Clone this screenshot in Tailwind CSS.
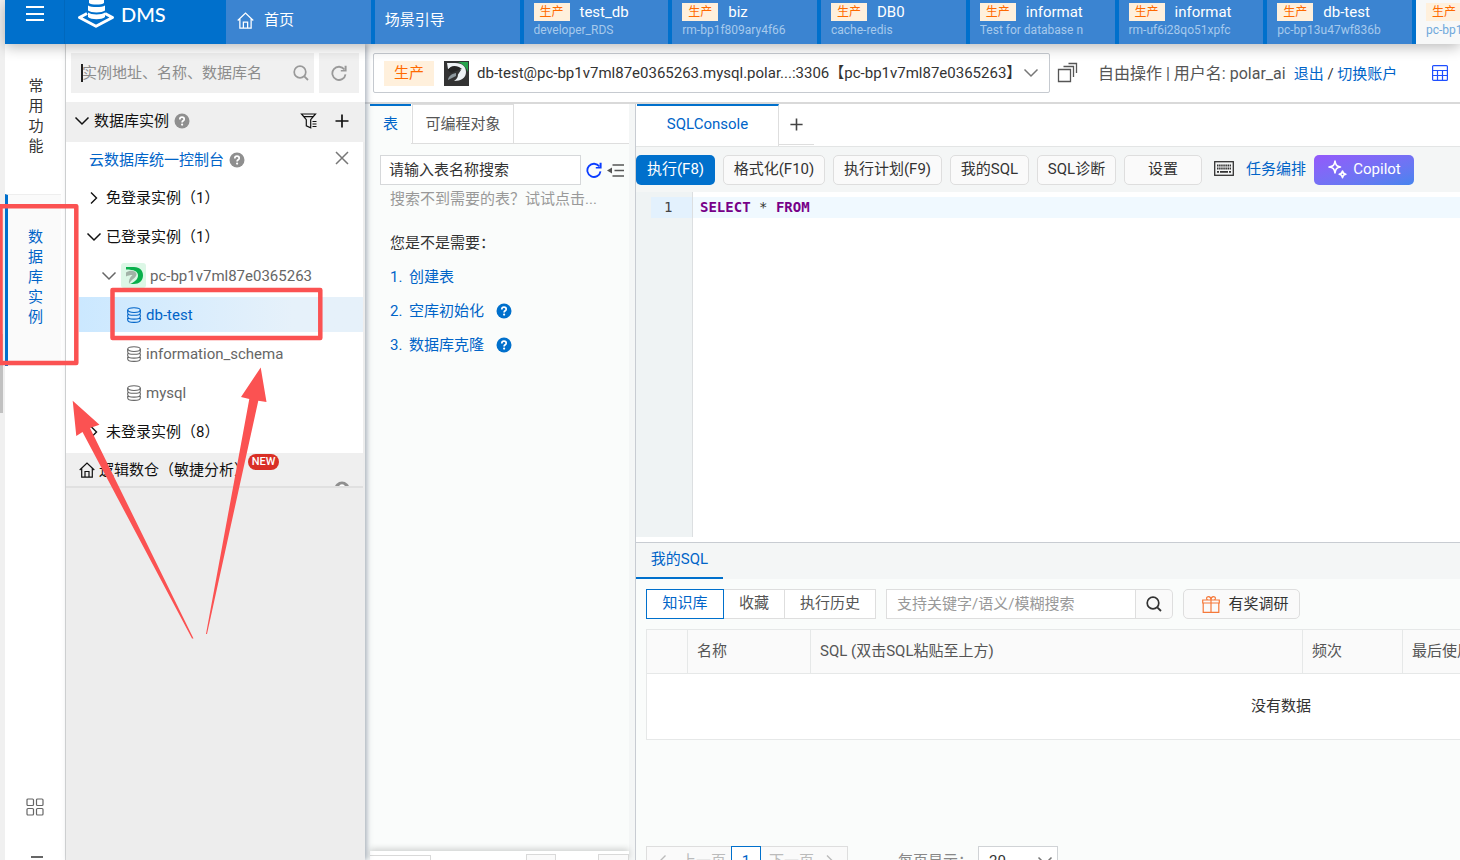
<!DOCTYPE html>
<html lang="zh-CN">

<head>
    <meta charset="UTF-8" />
    <meta name="viewport" content="width=device-width, initial-scale=1.0" />
    <title>DMS</title>
    <script src="https://cdn.jsdelivr.net/npm/@tailwindcss/browser@4"></script>
</head>

<body class="relative flex h-screen overflow-hidden bg-white text-[15px] leading-5 text-[#333] font-['Roboto','Noto_Sans_CJK_SC',sans-serif]">

    <!-- Shared icons -->
    <svg class="hidden">
        <symbol id="i-help" viewBox="0 0 16 16">
            <circle cx="8" cy="8" r="7.5" fill="currentColor" />
            <path d="M5.8 6.4c0-1.4 1-2.2 2.2-2.2s2.2.8 2.2 2c0 1.6-2.1 1.6-2.1 3.2" fill="none" stroke="#fff" stroke-width="1.7" />
            <circle cx="8.1" cy="11.6" r="1.1" fill="#fff" />
        </symbol>
        <symbol id="i-down" viewBox="0 0 16 16">
            <path d="M1.5 4.5 8 11l6.5-6.5" fill="none" stroke="currentColor" stroke-width="1.5" />
        </symbol>
        <symbol id="i-right" viewBox="0 0 16 16">
            <path d="M5 2.5 10.5 8 5 13.5" fill="none" stroke="currentColor" stroke-width="1.4" />
        </symbol>
        <symbol id="i-left" viewBox="0 0 16 16">
            <path d="M10.5 2.5 5 8l5.5 5.5" fill="none" stroke="currentColor" stroke-width="1.4" />
        </symbol>
        <symbol id="i-plus" viewBox="0 0 16 16">
            <path d="M8 1.5v13M1.5 8h13" fill="none" stroke="currentColor" stroke-width="1.7" />
        </symbol>
        <symbol id="i-search" viewBox="0 0 16 16">
            <circle cx="7" cy="7" r="5.8" fill="none" stroke="currentColor" stroke-width="1.7" />
            <path d="m11.3 11.3 3.7 3.7" stroke="currentColor" stroke-width="1.8" />
        </symbol>
        <symbol id="i-refresh" viewBox="0 0 16 16">
            <path d="M13.4 4.6A6.6 6.6 0 1 0 14.5 9.3" fill="none" stroke="currentColor" stroke-width="1.8" />
            <path d="M15.6.8v5.8H9.8v-1.5h3.8V.8z" fill="currentColor" />
        </symbol>
        <symbol id="i-db" viewBox="0 0 16 16">
            <g fill="none" stroke="currentColor" stroke-width="1.1">
                <ellipse cx="8" cy="3.1" rx="6.3" ry="2.4" />
                <path d="M1.7 3.1v2.8c0 1.300 2.800 2.400 6.300 2.400s6.300-1.100 6.300-2.400V3.100M1.700 7.500v2.200c0 1.300 2.800 2.400 6.300 2.400s6.300-1.100 6.300-2.400V7.500M1.700 11v2c0 1.300 2.800 2.400 6.300 2.400s6.300-1.100 6.300-2.400v-2" />
            </g>
        </symbol>
        <symbol id="i-home" viewBox="0 0 16 16">
            <g fill="none" stroke="currentColor" stroke-width="1.2">
                <path d="M.7 8 8 1l7.3 7M2.700 6.500v8.600h10.600V6.500" />
                <path d="M6 15V9.500h4V15" />
            </g>
        </symbol>
    </svg>

    <!-- Outer scroll bar -->
    <div class="w-[5px] shrink-0 bg-[#f0f0f0] pt-[334px]">
        <div class="h-[79px] w-[3px] bg-[#c1c1c1]"></div>
    </div>

    <div class="flex min-w-0 flex-1 flex-col">

        <!-- Header -->
        <header class="relative z-10 flex h-11 shrink-0 bg-[#0070cc] text-white shadow-[0_3px_14px_rgba(0,0,0,0.28)]">
            <button aria-label="菜单" class="flex w-[60px] justify-center border-r border-[#0068bd] pt-1.5">
                <svg class="h-4 w-[18px]" viewBox="0 0 18 16"><path d="M0 1h18M0 8h18M0 14h18" stroke="#fff" stroke-width="2" /></svg>
            </button>
            <a href="#" class="flex w-[161px] items-start gap-1.5 pl-3 text-white">
                <svg class="h-7 w-[38px]" viewBox="0 0 38 28">
                    <path d="M10 13.500 2.500 17.500 19 26.300 35.500 17.500 28 13.500" fill="none" stroke="#fff" stroke-width="3" stroke-linejoin="round" />
                    <path d="M12 0h15v3c-2 2-13 2-15 0zM11 5.500c3 2 14 2 17 0v5c-3 2.500-14 2.500-17 0zM11 12.500c3 2.500 14 2.500 17 0V17c-3 3-14 3-17 0z" fill="#fff" />
                </svg>
                <span class="text-[20px] leading-7 font-medium font-['Lato',sans-serif]">DMS</span>
            </a>
            <nav class="grid min-w-0 flex-1 grid-cols-[repeat(8,1fr)_44px] gap-1 overflow-hidden">
                <a href="#" class="flex items-center gap-2.5 bg-[#3b84d1] pb-1 pl-[11px]">
                    <svg class="size-[17px]"><use href="#i-home" /></svg>首页
                </a>
                <a href="#" class="flex items-center bg-[#3b84d1] pb-1 pl-2.5">场景引导</a>
                <a href="#" class="bg-[#3b84d1] pl-2.5 pt-0.5">
                    <span class="flex w-[106px] items-center gap-2.5 overflow-hidden"><span class="h-[18px] w-9 shrink-0 bg-[#fff0dc] text-center text-xs leading-[18px] text-[#ff6a00]">生产</span><span>test_db</span></span>
                    <span class="block w-[106px] overflow-hidden text-xs leading-4 whitespace-nowrap text-[#a6c9ec]">developer_RDS</span>
                </a>
                <a href="#" class="bg-[#3b84d1] pl-2.5 pt-0.5">
                    <span class="flex w-[106px] items-center gap-2.5 overflow-hidden"><span class="h-[18px] w-9 shrink-0 bg-[#fff0dc] text-center text-xs leading-[18px] text-[#ff6a00]">生产</span><span>biz</span></span>
                    <span class="block w-[106px] overflow-hidden text-xs leading-4 whitespace-nowrap text-[#a6c9ec]">rm-bp1f809ary4f66</span>
                </a>
                <a href="#" class="bg-[#3b84d1] pl-2.5 pt-0.5">
                    <span class="flex w-[106px] items-center gap-2.5 overflow-hidden"><span class="h-[18px] w-9 shrink-0 bg-[#fff0dc] text-center text-xs leading-[18px] text-[#ff6a00]">生产</span><span>DB0</span></span>
                    <span class="block w-[106px] overflow-hidden text-xs leading-4 whitespace-nowrap text-[#a6c9ec]">cache-redis</span>
                </a>
                <a href="#" class="bg-[#3b84d1] pl-2.5 pt-0.5">
                    <span class="flex w-[106px] items-center gap-2.5 overflow-hidden"><span class="h-[18px] w-9 shrink-0 bg-[#fff0dc] text-center text-xs leading-[18px] text-[#ff6a00]">生产</span><span>informat</span></span>
                    <span class="block w-[106px] overflow-hidden text-xs leading-4 whitespace-nowrap text-[#a6c9ec]">Test for database n</span>
                </a>
                <a href="#" class="bg-[#3b84d1] pl-2.5 pt-0.5">
                    <span class="flex w-[106px] items-center gap-2.5 overflow-hidden"><span class="h-[18px] w-9 shrink-0 bg-[#fff0dc] text-center text-xs leading-[18px] text-[#ff6a00]">生产</span><span>informat</span></span>
                    <span class="block w-[106px] overflow-hidden text-xs leading-4 whitespace-nowrap text-[#a6c9ec]">rm-uf6i28qo51xpfc</span>
                </a>
                <a href="#" class="bg-[#3b84d1] pl-2.5 pt-0.5">
                    <span class="flex w-[106px] items-center gap-2.5 overflow-hidden"><span class="h-[18px] w-9 shrink-0 bg-[#fff0dc] text-center text-xs leading-[18px] text-[#ff6a00]">生产</span><span>db-test</span></span>
                    <span class="block w-[106px] overflow-hidden text-xs leading-4 whitespace-nowrap text-[#a6c9ec]">pc-bp13u47wf836b</span>
                </a>
                <a href="#" class="overflow-hidden bg-[#f7f8f8] pl-2.5 pt-0.5">
                    <span class="flex h-5 items-center"><span class="h-[18px] w-9 shrink-0 bg-[#fff0dc] text-center text-xs leading-[18px] text-[#ff6a00]">生产</span></span>
                    <span class="block text-xs leading-4 whitespace-nowrap text-[#6fa8dc]">pc-bp1</span>
                </a>
            </nav>
        </header>

        <div class="flex min-h-0 flex-1">

            <!-- Rail -->
            <aside class="flex w-[61px] shrink-0 flex-col border-r border-[#d9d9d9]">
                <button class="flex h-[150px] flex-col items-center pt-8 pl-0.5">
                    <span>常</span><span>用</span><span>功</span><span>能</span>
                </button>
                <button class="mr-1 flex h-[172px] flex-col items-center border-t border-l-3 border-t-[#eee] border-l-[#0070cc] bg-[#fafafa] pt-8 pl-0.5 text-[#0064c8]">
                    <span>数</span><span>据</span><span>库</span><span>实</span><span>例</span>
                </button>
                <div class="mt-auto flex h-[62px] shrink-0 flex-col items-center gap-10">
                    <svg class="size-[18px] shrink-0" viewBox="0 0 18 18" fill="none" stroke="#666" stroke-width="1.2">
                        <rect x="1" y="1" width="6.5" height="6.5" rx="1" /><rect x="10.5" y="1" width="6.5" height="6.5" rx="1" />
                        <rect x="1" y="10.5" width="6.5" height="6.5" rx="1" /><rect x="10.5" y="10.5" width="6.5" height="6.5" rx="1" />
                    </svg>
                    <div class="ml-1 h-0.5 w-3 shrink-0 bg-[#666]"></div>
                </div>
            </aside>

            <!-- Instance tree -->
            <aside class="relative z-[5] flex w-[299px] shrink-0 flex-col bg-[#ededed] text-[#111] shadow-[2px_0_5px_rgba(90,105,125,0.5)]">
                <div class="flex gap-[5px] bg-white px-[5px] py-[9px] pr-1.5">
                    <label class="relative flex h-10 flex-1 items-center bg-[#f0f0f0] pr-[5px]">
                        <input type="text" aria-label="搜索实例" placeholder="实例地址、名称、数据库名" class="h-full w-full min-w-0 bg-transparent pl-[11px] outline-none placeholder:text-[#8c8c8c]" />
                        <span class="absolute left-2.5 h-[18px] w-0.5 bg-[#222]"></span>
                        <svg class="size-4 shrink-0 text-[#999]"><use href="#i-search" /></svg>
                    </label>
                    <button aria-label="刷新" class="flex size-10 items-center justify-center bg-[#f0f0f0] text-[#999]">
                        <svg class="size-4"><use href="#i-refresh" /></svg>
                    </button>
                </div>

                <div class="flex h-10 shrink-0 items-center gap-1 bg-[#efefef] pb-0.5 pr-[15px] pl-2">
                    <svg class="size-4"><use href="#i-down" /></svg>
                    <span>数据库实例</span>
                    <svg class="ml-px size-4 text-[#8f8f8f]"><use href="#i-help" /></svg>
                    <button aria-label="筛选" class="mr-3 ml-auto">
                        <svg class="size-[18px]" viewBox="0 0 18 18" fill="none" stroke="currentColor" stroke-width="1.2">
                            <path d="M1.500 2h14l-4.800 5.700v8.100l-4.400-2V7.700z M4 4.700h9" /><path d="M12.500 9.500h4M12.500 12h4M12.500 14.500h4" />
                        </svg>
                    </button>
                    <button aria-label="新增"><svg class="size-4"><use href="#i-plus" /></svg></button>
                </div>

                <div class="mr-0.5 border-b-2 border-white bg-white">
                    <div class="flex h-9 items-center gap-1 pb-px pr-[13px] pl-[23px]">
                        <a href="#" class="text-[#0064c8]">云数据库统一控制台</a>
                        <svg class="ml-px size-4 text-[#8f8f8f]"><use href="#i-help" /></svg>
                        <button aria-label="关闭" class="ml-auto pb-1">
                            <svg class="size-4" viewBox="0 0 16 16"><path d="m2 2 12 12M14 2 2 14" stroke="#777" stroke-width="1.5" /></svg>
                        </button>
                    </div>
                    <div class="flex h-[39px] items-center gap-1 pl-5"><svg class="size-4"><use href="#i-right" /></svg>免登录实例（1）</div>
                    <div class="flex h-[39px] items-center gap-1 pl-5"><svg class="size-4"><use href="#i-down" /></svg>已登录实例（1）</div>
                    <div class="flex h-[39px] items-center gap-1 pl-[35px] text-[#666]">
                        <svg class="size-4"><use href="#i-down" /></svg>
                        <svg class="size-[25px]" viewBox="0 0 25 25">
                            <rect width="25" height="25" rx="3" fill="#dcf7e6" />
                            <path d="M5 4h8c6 0 9 4 9 8.500 0 5-4 8.500-9 8.500H9c5-2 8-5 8-8.500C17 8.500 13 6.500 5 6.500z" fill="#09b04c" />
                            <path d="M5 9.500C9 6.500 15 7.500 15.500 11c.3 3.500-5 5-7.500 10-.5-3 .5-6.500 3.500-9C9 12 7 12.500 5 13.500z" fill="#a2b3a7" />
                        </svg>
                        <span>pc-bp1v7ml87e0365263</span>
                    </div>
                    <div class="h-[39px] py-0.5 pl-[13px]">
                        <div class="flex h-[35px] items-center gap-1 bg-linear-to-r from-[#cbe8ff] to-[#e6f1fa] to-75% pl-[47px] text-[#0064c8]">
                            <svg class="size-4"><use href="#i-db" /></svg>db-test
                        </div>
                    </div>
                    <div class="flex h-[39px] items-center gap-1 pl-[60px] text-[#666]"><svg class="size-4"><use href="#i-db" /></svg>information_schema</div>
                    <div class="flex h-[39px] items-center gap-1 pl-[60px] text-[#666]"><svg class="size-4"><use href="#i-db" /></svg>mysql</div>
                    <div class="flex h-[39px] items-center gap-1 pl-5"><svg class="size-4"><use href="#i-right" /></svg>未登录实例（8）</div>
                </div>

                <div class="relative mr-0.5 flex h-[35px] shrink-0 items-center gap-1 overflow-hidden border-b-2 border-[#e0e0e0] bg-[#efefef] pl-[13px]">
                    <svg class="size-4"><use href="#i-home" /></svg>
                    <span>逻辑数仓（敏捷分析）</span>
                    <span class="absolute top-px left-[182px] h-4 w-[31px] rounded-full bg-[#d93026] text-center text-[11px] leading-4 font-medium text-white">NEW</span>
                    <svg class="absolute top-7 right-[13px] size-4 text-[#8f8f8f]"><use href="#i-help" /></svg>
                </div>
            </aside>

            <main class="flex min-w-0 flex-1 flex-col">

                <!-- Connection bar -->
                <div class="flex h-[60px] shrink-0 items-start border-b-2 border-[#d9d9d9] pt-[9px] pl-2">
                    <button class="flex h-10 w-[677px] shrink-0 items-center rounded-xs border border-[#c6cad0] px-2.5">
                        <span class="mr-2.5 h-[25px] w-[50px] shrink-0 bg-[#fff0dc] text-center leading-[25px] text-[#ff6a00]">生产</span>
                        <svg class="mr-2 size-[25px] shrink-0" viewBox="0 0 25 25">
                            <rect width="25" height="25" fill="#333" />
                            <path d="M14 1h10v10c-2-5-5-8-10-10z" fill="#27a34d" />
                            <path d="M3 2h8c8 0 11 4 11 9 0 6-5 9-12 9 3-2 4-4 4-6.500L17 9l-5-3-8 2z" fill="#eef2f5" />
                            <path d="M4 9c2-4 6-5 11-3l3 2-6 2-5 2z" fill="#252525" /><path d="M12 12c-5 1-8 4-8 7l8-4z" fill="#8e999e" />
                        </svg>
                        <span class="whitespace-nowrap">db-test@pc-bp1v7ml87e0365263.mysql.polar...:3306【pc-bp1v7ml87e0365263】</span>
                        <svg class="ml-auto size-4 shrink-0 text-[#777]"><use href="#i-down" /></svg>
                    </button>
                    <button aria-label="复制" class="mt-[9px] ml-[7px]">
                        <svg class="size-[21px]" viewBox="0 0 21 21" fill="none" stroke="#555" stroke-width="1.3">
                            <path d="M1.500 7.500h12v12h-12zM6.500 4.500h10V15M11.500 1.500h8V11" />
                        </svg>
                    </button>
                    <div class="mt-[11px] ml-5 flex items-center gap-2 whitespace-nowrap">
                        <span class="text-base leading-5 text-[#555]">自由操作 | 用户名: polar_ai</span>
                        <span><a href="#" class="text-[#0064c8]">退出</a> / <a href="#" class="text-[#0064c8]">切换账户</a></span>
                    </div>
                    <button aria-label="表格" class="mt-3 mr-3 ml-auto">
                        <svg class="size-4" viewBox="0 0 16 16" fill="none" stroke="#1f4fff" stroke-width="1.2">
                            <rect x=".6" y=".6" width="14.8" height="14.8" rx="1" /><path d="M.6 5.500h14.800M.6 10.500h14.800M5.500 5.500v10M10.500 5.500v10" />
                        </svg>
                    </button>
                </div>

                <div class="flex min-h-0 flex-1">

                    <!-- Table list -->
                    <section class="flex w-[270px] shrink-0 flex-col border-r-6 border-[#f4f6f6] bg-[#fafcfb] pl-[5px]">
                        <div class="flex h-10 shrink-0 border-b border-[#dedede] bg-white text-[#555]">
                            <button class="-mb-px w-[41px] border-t-2 border-[#0070cc] bg-[#fafcfb] pb-0.5 text-[#0064c8]">表</button>
                            <button class="ml-px w-[102px] border-x border-t border-[#dedede]">可编程对象</button>
                        </div>
                        <div class="mt-[11px] flex items-center gap-[5px] pl-2.5">
                            <input type="text" aria-label="表名称" placeholder="请输入表名称搜索" class="h-[30px] w-[201px] border border-[#d6d8da] bg-white px-2 outline-none placeholder:text-[#333]" />
                            <button aria-label="刷新表"><svg class="size-4 text-[#0a3cff]"><use href="#i-refresh" /></svg></button>
                            <button aria-label="收起">
                                <svg class="size-[17px]" viewBox="0 0 17 17"><path d="M5.500 3H17M7.500 8.500H17M5.500 14H17" stroke="#555" stroke-width="1.3" /><path d="M0 8.500 5 5.500v6z" fill="#555" /></svg>
                            </button>
                        </div>
                        <div class="flex flex-col gap-[14px] pt-1 pl-5">
                            <p class="mb-2.5 text-[#999]">搜索不到需要的表？试试点击...</p>
                            <p>您是不是需要：</p>
                            <a href="#" class="flex items-center text-[#0064c8]"><span class="w-[19px]">1.</span>创建表</a>
                            <div class="flex items-center gap-3 text-[#0064c8]"><a href="#" class="flex"><span class="w-[19px]">2.</span>空库初始化</a><svg class="size-4 text-[#0070cc]"><use href="#i-help" /></svg></div>
                            <div class="flex items-center gap-3 text-[#0064c8]"><a href="#" class="flex"><span class="w-[19px]">3.</span>数据库克隆</a><svg class="size-4 text-[#0070cc]"><use href="#i-help" /></svg></div>
                        </div>
                        <div class="mt-auto flex h-[9px] shrink-0 items-end bg-white shadow-[0_-2px_6px_rgba(0,0,0,0.18)]">
                            <div class="h-[5px] w-[61px] border-t border-r border-[#d9d9d9]"></div>
                            <div class="ml-auto h-1.5 w-[30px] border-x border-t border-[#d9d9d9] bg-[#fafafa]"></div>
                            <div class="ml-[42px] h-1.5 w-[31px] border-x border-t border-[#d9d9d9] bg-[#fafafa]"></div>
                        </div>
                    </section>

                    <!-- SQL console -->
                    <section class="flex min-w-0 flex-1 flex-col border-l border-[#c8ccd2]">
                        <div class="flex h-[43px] shrink-0 border-b border-[#e3e5e5] bg-white">
                            <button class="ml-px w-[142px] border-t-2 border-r border-t-[#0070cc] border-r-[#dedede] pb-1 text-[#0064c8]">SQLConsole</button>
                            <button aria-label="新建" class="mb-px flex w-[35px] items-center justify-center border-b border-[#dedede] text-[#444]"><svg class="size-[15px]"><use href="#i-plus" /></svg></button>
                        </div>
                        <div class="flex h-[45px] shrink-0 items-center gap-2 bg-[#f4f6f6] whitespace-nowrap">
                            <button class="h-[30px] w-[79px] rounded-[5px] bg-[#0070cc] pb-0.5 text-white">执行(F8)</button>
                            <button class="h-[30px] w-[102px] rounded-[5px] border border-[#dedede] bg-[#fafafa] pb-0.5">格式化(F10)</button>
                            <button class="h-[30px] w-[109px] rounded-[5px] border border-[#dedede] bg-[#fafafa] pb-0.5">执行计划(F9)</button>
                            <button class="h-[30px] w-[79px] rounded-[5px] border border-[#dedede] bg-[#fafafa] pb-0.5">我的SQL</button>
                            <button class="h-[30px] w-[79px] rounded-[5px] border border-[#dedede] bg-[#fafafa] pb-0.5">SQL诊断</button>
                            <button class="h-[30px] w-[78px] rounded-[5px] border border-[#dedede] bg-[#fafafa] pb-0.5">设置</button>
                            <button aria-label="快捷键" class="mx-1 pb-0.5">
                                <svg class="h-[15px] w-5" viewBox="0 0 20 15" fill="none" stroke="#333"><rect x=".7" y=".7" width="18.6" height="13.6" stroke-width="1.3" /><path d="M3 4.500h14M3 7.500h14" stroke-width="2" stroke-dasharray="1.500 .6" /><path d="M3 10.800h2M6 10.800h8M15 10.800h2" stroke-width="1.8" /></svg>
                            </button>
                            <a href="#" class="pb-0.5 text-[#0064c8]">任务编排</a>
                            <button class="flex h-[30px] w-[100px] items-center justify-center gap-1.5 rounded-[5px] bg-linear-to-br from-[#9358fb] to-[#4584ee] pb-0.5 text-white">
                                <svg class="size-5" viewBox="0 0 20 20" fill="none" stroke="#fff" stroke-width="1.6" stroke-linejoin="round"><path d="M8 2C8.600 6.300 9.700 7.400 13.500 8 9.700 8.600 8.600 9.700 8 14 7.400 9.700 6.300 8.600 2 8 6.300 7.400 7.400 6.300 8 2z" /><path d="M15.500 12c.4 2.400.9 2.900 3.300 3.300-2.400.4-2.900.9-3.300 3.300-.4-2.400-.9-2.900-3.300-3.300 2.400-.4 2.900-.9 3.300-3.300z" /></svg>Copilot
                            </button>
                        </div>

                        <!-- Editor -->
                        <div class="flex min-h-0 flex-1 bg-white pb-[5px] text-sm leading-5 font-['DejaVu_Sans_Mono',monospace]">
                            <div class="w-[57px] border-r border-[#dcdfe1] bg-[#eff3f4] pt-[5px] pl-[15px]">
                                <div class="h-[21px] bg-[#e3f1fd] pl-[13px] text-[#444]">1</div>
                            </div>
                            <div class="flex-1 pt-[5px]">
                                <div class="h-[21px] bg-[#f0f9ff] pl-[7px]"><span class="font-bold text-[#770088]">SELECT</span> * <span class="font-bold text-[#770088]">FROM</span></div>
                            </div>
                        </div>

                        <!-- Saved SQL -->
                        <div class="h-[318px] shrink-0 overflow-hidden border-t border-[#c8ccd2] bg-[#fafcfb]">
                            <div class="h-9 bg-[#f4f6f6]">
                                <button class="h-9 w-[87px] border-b-2 border-[#0070cc] pb-0.5 text-[#0064c8]">我的SQL</button>
                            </div>
                            <div class="mt-2.5 flex h-[30px] pl-2.5 text-[#555]">
                                <button class="w-[78px] border border-[#0070cc] bg-white pb-0.5 text-[#0064c8]">知识库</button>
                                <button class="w-[61px] border-y border-r border-[#dedede] bg-white pb-0.5">收藏</button>
                                <button class="w-[91px] border-y border-r border-[#dedede] bg-white pb-0.5">执行历史</button>
                                <input type="text" aria-label="搜索SQL" placeholder="支持关键字/语义/模糊搜索" class="ml-2.5 w-[250px] border border-[#dedede] bg-white px-2.5 outline-none placeholder:text-[#999]" />
                                <button aria-label="搜索" class="flex w-[37px] items-center justify-center rounded-r-[5px] border-y border-r border-[#dedede] bg-[#fafafa] text-[#333]"><svg class="size-4"><use href="#i-search" /></svg></button>
                                <button class="ml-2.5 flex w-[117px] items-center justify-center gap-2 rounded-[5px] border border-[#dedede] bg-[#fafafa] pl-2 text-[#333]">
                                    <svg class="h-[17px] w-[18px]" viewBox="0 0 18 17" fill="none" stroke="#f5793a" stroke-width="1.2"><path d="M.7 4h16.600v3H.7zM1.200 7v9.300h15.600V7M9 4v12.300M9 4H6C3.500 3 4.500.7 6.500.7S9 2.500 9 4c0-1.500.5-3.300 2.500-3.300s3 2.300.5 3.300z" /></svg>有奖调研
                                </button>
                            </div>
                            <table class="mt-2.5 ml-2.5 w-[1270px] table-fixed border-collapse border border-[#e6e8e8] text-left">
                                <thead class="h-11 bg-[#fafafa] text-[#555]">
                                    <tr>
                                        <th class="w-[41px] border border-[#e6e8e8]"></th>
                                        <th class="w-[123px] border border-[#e6e8e8] px-[9px] pb-0.5 font-normal">名称</th>
                                        <th class="w-[492px] border border-[#e6e8e8] px-[9px] pb-0.5 font-normal">SQL (双击SQL粘贴至上方)</th>
                                        <th class="w-[100px] border border-[#e6e8e8] px-[9px] pb-0.5 font-normal">频次</th>
                                        <th class="border border-[#e6e8e8] px-[9px] pb-0.5 font-normal">最后使用时间</th>
                                    </tr>
                                </thead>
                                <tbody class="bg-white">
                                    <tr><td colspan="5" class="h-[66px] pb-0.5 text-center">没有数据</td></tr>
                                </tbody>
                            </table>
                            <div class="mt-[106px] ml-2.5 flex h-[30px] items-center">
                                <button disabled class="flex h-[30px] w-[85px] items-center gap-1.5 border-y border-l border-[#dedede] bg-[#fafafa] pl-2 text-[#bbb]"><svg class="mr-1 size-4"><use href="#i-left" /></svg>上一页</button>
                                <button class="h-[30px] w-[30px] border border-[#0070cc] bg-white text-[#0064c8]">1</button>
                                <button disabled class="flex h-[30px] w-[87px] items-center gap-2 border-y border-r border-[#dedede] bg-[#fafafa] pl-2 text-[#bbb]">下一页<svg class="size-4"><use href="#i-right" /></svg></button>
                                <label for="page-size" class="ml-[50px] w-20 whitespace-nowrap text-[#888]">每页显示：</label>
                                <div class="relative">
                                    <select id="page-size" class="h-[30px] w-20 appearance-none border border-[#d0d3d6] bg-white pl-2.5"><option>20</option></select>
                                    <svg class="pointer-events-none absolute top-[7px] right-[5px] size-4 text-[#777]"><use href="#i-down" /></svg>
                                </div>
                            </div>
                        </div>
                    </section>
                </div>
            </main>
        </div>
    </div>

    <!-- Callouts -->
    <svg class="pointer-events-none absolute top-0 left-0 z-20 h-[660px] w-[340px]" viewBox="0 0 340 660">
        <g fill="none" stroke="#fb5252" stroke-width="4.5" stroke-linejoin="round">
            <rect x=".5" y="206.2" width="75.8" height="156.8" />
            <rect x="112.5" y="290" width="207.8" height="48" />
        </g>
        <path d="M72.700 400.700 99.500 424.700 90 428 193.500 638.500H192L82.500 432 76.300 436z" fill="#fb5252" />
        <path d="M260.700 367.500 266.500 402 258.300 400.700 207 634H206L249.300 399 241 397z" fill="#fb5252" />
    </svg>
</body>

</html>
